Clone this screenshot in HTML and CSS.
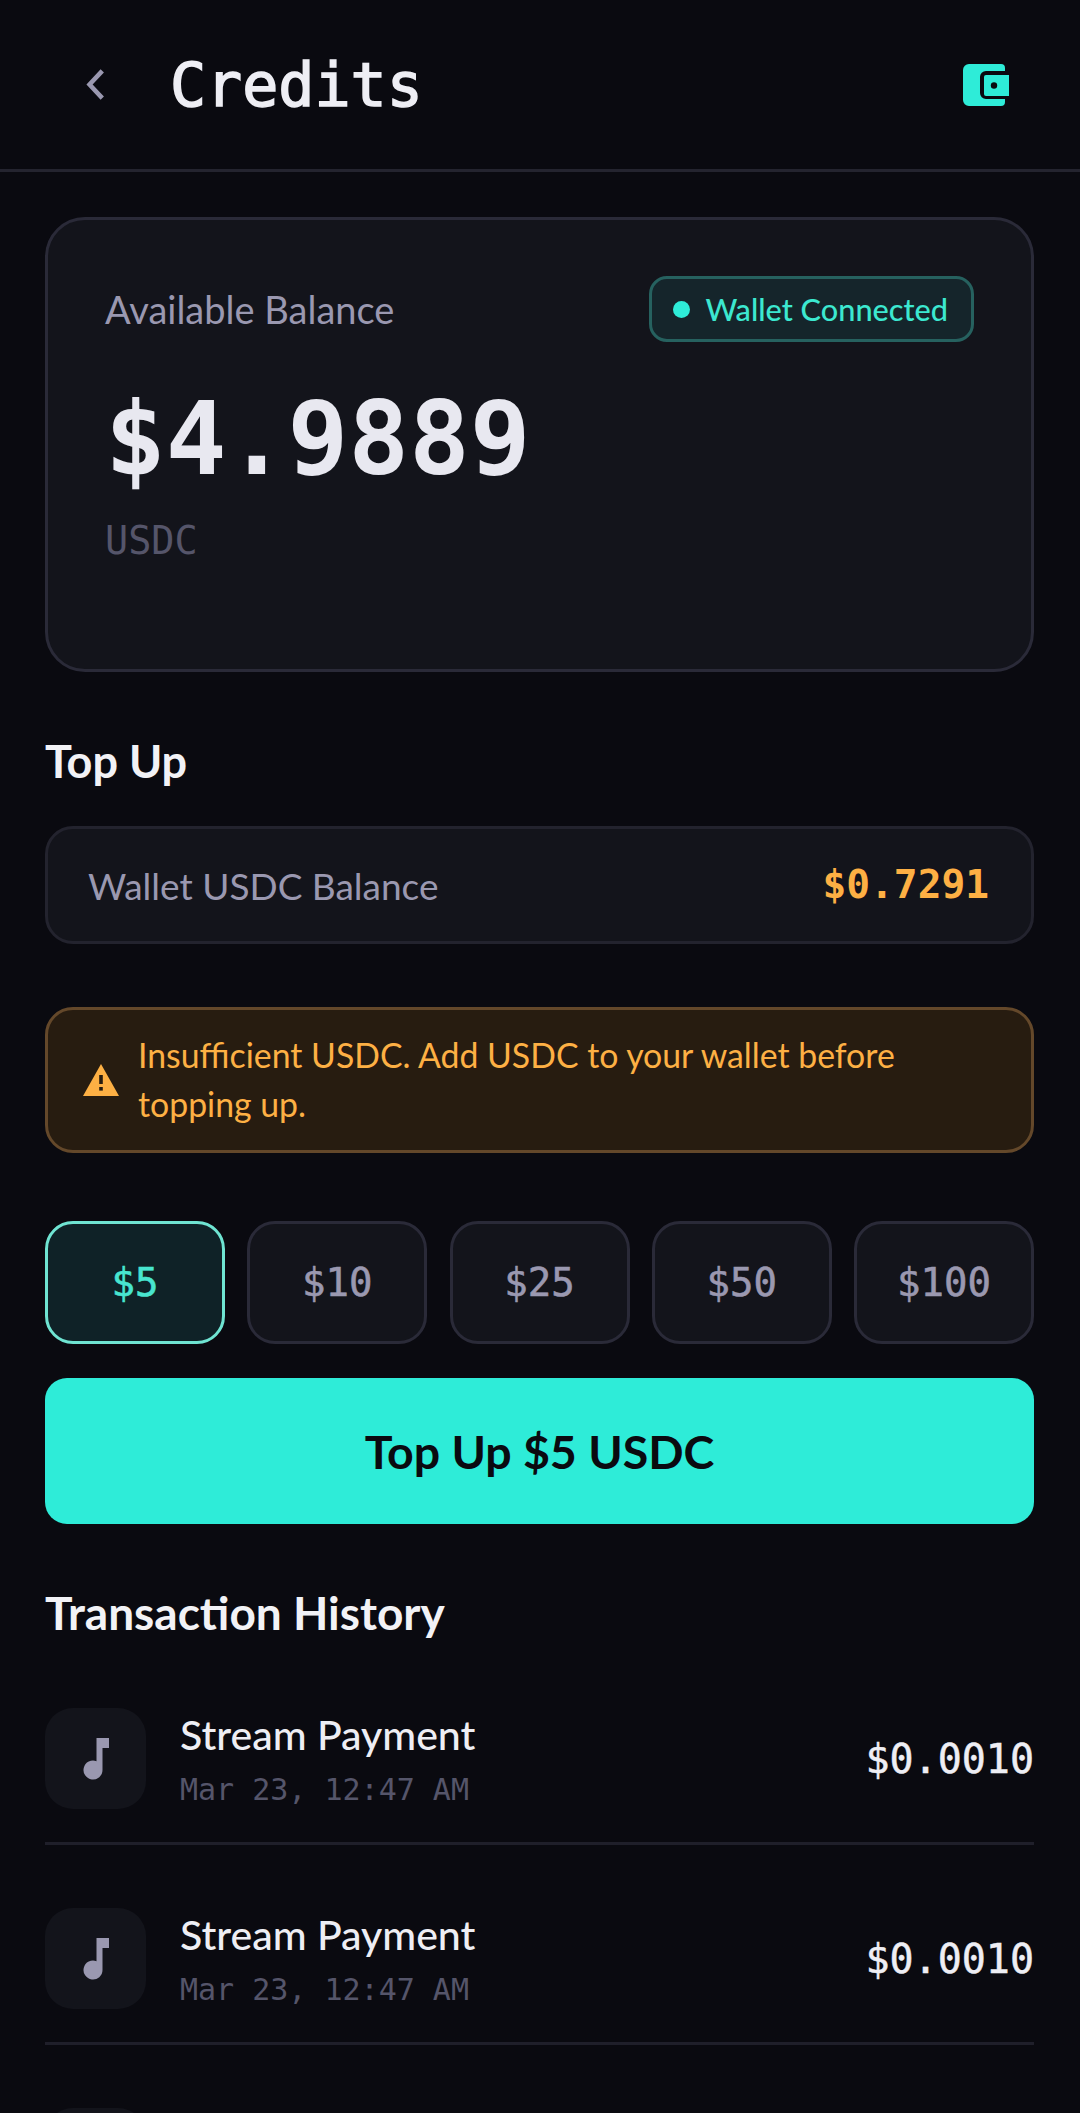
FILE: index.html
```html
<!DOCTYPE html>
<html>
<head>
<meta charset="utf-8">
<title>Credits</title>
<link rel="stylesheet" href="styles.css">
</head>
<body>

<div class="header">
  <div class="header-left">
    <svg class="back-icon" viewBox="0 0 22 36"><path d="M19 3 L5 18 L19 33" fill="none" stroke="#9a98b0" stroke-width="5"/></svg>
    <div class="page-title">Credits</div>
  </div>
  <svg class="wallet-icon" viewBox="0 0 46 42">
    <path d="M6 0 H38 a4 4 0 0 1 4 4 V7 H23 a6 6 0 0 0 -6 6 V29 a6 6 0 0 0 6 6 H42 V38 a4 4 0 0 1 -4 4 H6 a6 6 0 0 1 -6 -6 V6 a6 6 0 0 1 6 -6 Z" fill="#2eecd8"/>
    <path d="M21 13 a2 2 0 0 1 2 -2 H46 V32 H23 a2 2 0 0 1 -2 -2 Z" fill="#2eecd8"/>
    <circle cx="31" cy="21.5" r="3.2" fill="#0a0a10"/>
  </svg>
</div>

<div class="content">

  <div class="balance-card">
    <div class="balance-top">
      <div class="balance-label">Available Balance</div>
      <div class="badge"><span class="badge-dot"></span>Wallet Connected</div>
    </div>
    <div class="balance-value">$4.9889</div>
    <div class="balance-unit">USDC</div>
  </div>

  <div class="section-title topup-title">Top Up</div>

  <div class="wallet-row">
    <div class="wallet-label">Wallet USDC Balance</div>
    <div class="wallet-value">$0.7291</div>
  </div>

  <div class="warning">
    <svg class="warning-icon" viewBox="0 0 36 32">
      <path d="M18 0 L36 32 H0 Z" fill="#fdb044"/>
      <rect x="16.2" y="11" width="3.6" height="9" fill="#271c10"/>
      <rect x="16.2" y="23" width="3.6" height="3.6" fill="#271c10"/>
    </svg>
    <div class="warning-text">Insufficient USDC. Add USDC to your wallet before topping up.</div>
  </div>

  <div class="amounts">
    <div class="amount active">$5</div>
    <div class="amount">$10</div>
    <div class="amount">$25</div>
    <div class="amount">$50</div>
    <div class="amount">$100</div>
  </div>

  <div class="topup-btn">Top Up $5 USDC</div>

  <div class="section-title history-title">Transaction History</div>

  <div class="tx-row">
    <div class="tx-icon">
      <svg class="note-icon" viewBox="0 0 28 42"><path d="M15.500 0 H28 V10 H21.500 V32 A9.500 9.500 0 1 1 15.500 23.170 Z" fill="#9a98b0"/></svg>
    </div>
    <div class="tx-info">
      <div class="tx-name">Stream Payment</div>
      <div class="tx-date">Mar 23, 12:47 AM</div>
    </div>
    <div class="tx-amount">$0.0010</div>
  </div>

  <div class="tx-row">
    <div class="tx-icon">
      <svg class="note-icon" viewBox="0 0 28 42"><path d="M15.500 0 H28 V10 H21.500 V32 A9.500 9.500 0 1 1 15.500 23.170 Z" fill="#9a98b0"/></svg>
    </div>
    <div class="tx-info">
      <div class="tx-name">Stream Payment</div>
      <div class="tx-date">Mar 23, 12:47 AM</div>
    </div>
    <div class="tx-amount">$0.0010</div>
  </div>

  <div class="tx-row">
    <div class="tx-icon"></div>
  </div>

</div>

</body>
</html>
```

FILE: styles.css
```css
html, body
{
  margin:0;
  padding:0;
  height:2113px;
  overflow:hidden;
  background-color:#0a0a10;
  color:#eeeef4;
  font-family:"Lato", sans-serif;
}

body
{
  display:flex;
  flex-direction:column;
}

.header
{
  height:172px;
  flex-shrink:0;
  box-sizing:border-box;
  border-bottom:3px solid #24242f;
  padding:0 71px 0 85px;
  display:flex;
  align-items:center;
  justify-content:space-between;
}

.header-left
{
  display:flex;
  align-items:center;
  gap:65px;
}

.back-icon
{
  width:20px;
  height:33px;
}

.page-title
{
  font-family:"DejaVu Sans Mono", monospace;
  font-size:60px;
  line-height:70px;
  -webkit-text-stroke:1.5px #eeeef4;
}

.wallet-icon
{
  width:46px;
  height:42px;
}

.content
{
  flex:1;
  min-height:0;
  overflow:hidden;
  padding:45px 46px 0 45px;
}

.balance-card
{
  height:455px;
  box-sizing:border-box;
  background-color:#13141b;
  border:3px solid #2a2a38;
  border-radius:40px;
  padding:56px 57px 0 57px;
}

.balance-top
{
  display:flex;
  align-items:center;
  justify-content:space-between;
}

.balance-label
{
  font-size:38px;
  color:#9a98b0;
}

.badge
{
  height:66px;
  box-sizing:border-box;
  padding:0 23px 0 21px;
  display:flex;
  align-items:center;
  gap:15px;
  background-color:#15252b;
  border:3px solid #26615f;
  border-radius:18px;
  color:#3ce8d0;
  font-size:30.700px;
  font-weight:500;
}

.badge-dot
{
  width:17px;
  height:17px;
  border-radius:50%;
  background-color:#2eecd8;
}

.balance-value
{
  margin-top:37px;
  font-family:"DejaVu Sans Mono", monospace;
  font-size:101px;
  font-weight:bold;
  line-height:120px;
  color:#e8e8f0;
}

.balance-unit
{
  margin-top:19px;
  font-family:"DejaVu Sans Mono", monospace;
  font-size:38.500px;
  line-height:46px;
  color:#55556a;
}

.section-title
{
  font-weight:700;
  color:#f2f2f6;
}

.topup-title
{
  margin-top:64px;
  margin-bottom:40px;
  font-size:45px;
  line-height:50px;
}

.wallet-row
{
  height:118px;
  box-sizing:border-box;
  background-color:#13141b;
  border:3px solid #23232e;
  border-radius:28px;
  padding:0 42px 0 40px;
  display:flex;
  align-items:center;
  justify-content:space-between;
}

.wallet-label
{
  font-size:37px;
  color:#9a98b0;
}

.wallet-value
{
  font-family:"DejaVu Sans Mono", monospace;
  font-size:39.500px;
  font-weight:bold;
  line-height:44px;
  margin-top:-2px;
  color:#fdb044;
}

.warning
{
  margin-top:63px;
  height:146px;
  box-sizing:border-box;
  background-color:#271c10;
  border:3px solid #64482a;
  border-radius:28px;
  padding:0 40px 0 35px;
  display:flex;
  align-items:center;
  gap:19px;
}

.warning-icon
{
  width:36px;
  height:32px;
  flex-shrink:0;
}

.warning-text
{
  font-size:33.800px;
  line-height:49px;
  color:#fdb044;
}

.amounts
{
  margin-top:68px;
  display:flex;
  justify-content:space-between;
}

.amount
{
  width:180px;
  height:123px;
  box-sizing:border-box;
  background-color:#13141b;
  border:3px solid #2a2a38;
  border-radius:28px;
  display:flex;
  align-items:center;
  justify-content:center;
  font-family:"DejaVu Sans Mono", monospace;
  font-size:39px;
  -webkit-text-stroke:0.6px #9a98b0;
  color:#9a98b0;
}

.amount.active
{
  background-color:#0f2227;
  border-color:#6fe4d2;
  color:#48e5cf;
  -webkit-text-stroke:0.6px #48e5cf;
}

.topup-btn
{
  margin-top:34px;
  height:146px;
  background-color:#2eecd8;
  border-radius:22px;
  display:flex;
  align-items:center;
  justify-content:center;
  font-size:46.500px;
  font-weight:700;
  color:#0a0a10;
}

.history-title
{
  margin-top:61px;
  margin-bottom:67px;
  font-size:46px;
  line-height:56px;
}

.tx-row
{
  margin-bottom:63px;
  padding-bottom:33px;
  border-bottom:3px solid #1f1f2a;
  display:flex;
  align-items:center;
}

.tx-icon
{
  width:101px;
  height:101px;
  flex-shrink:0;
  background-color:#13141b;
  border-radius:28px;
  display:flex;
  align-items:center;
  justify-content:center;
}

.note-icon
{
  width:28px;
  height:42px;
  margin-left:-2px;
}

.tx-info
{
  flex:1;
  align-self:flex-start;
  margin-left:34px;
}

.tx-name
{
  font-size:41px;
  line-height:50px;
  margin-top:2px;
  font-weight:500;
  color:#eeeef4;
}

.tx-date
{
  margin-top:11px;
  font-family:"DejaVu Sans Mono", monospace;
  font-size:30px;
  line-height:38px;
  color:#55556a;
}

.tx-amount
{
  font-family:"DejaVu Sans Mono", monospace;
  font-size:40px;
  -webkit-text-stroke:0.5px #eeeef4;
  color:#eeeef4;
}
```
